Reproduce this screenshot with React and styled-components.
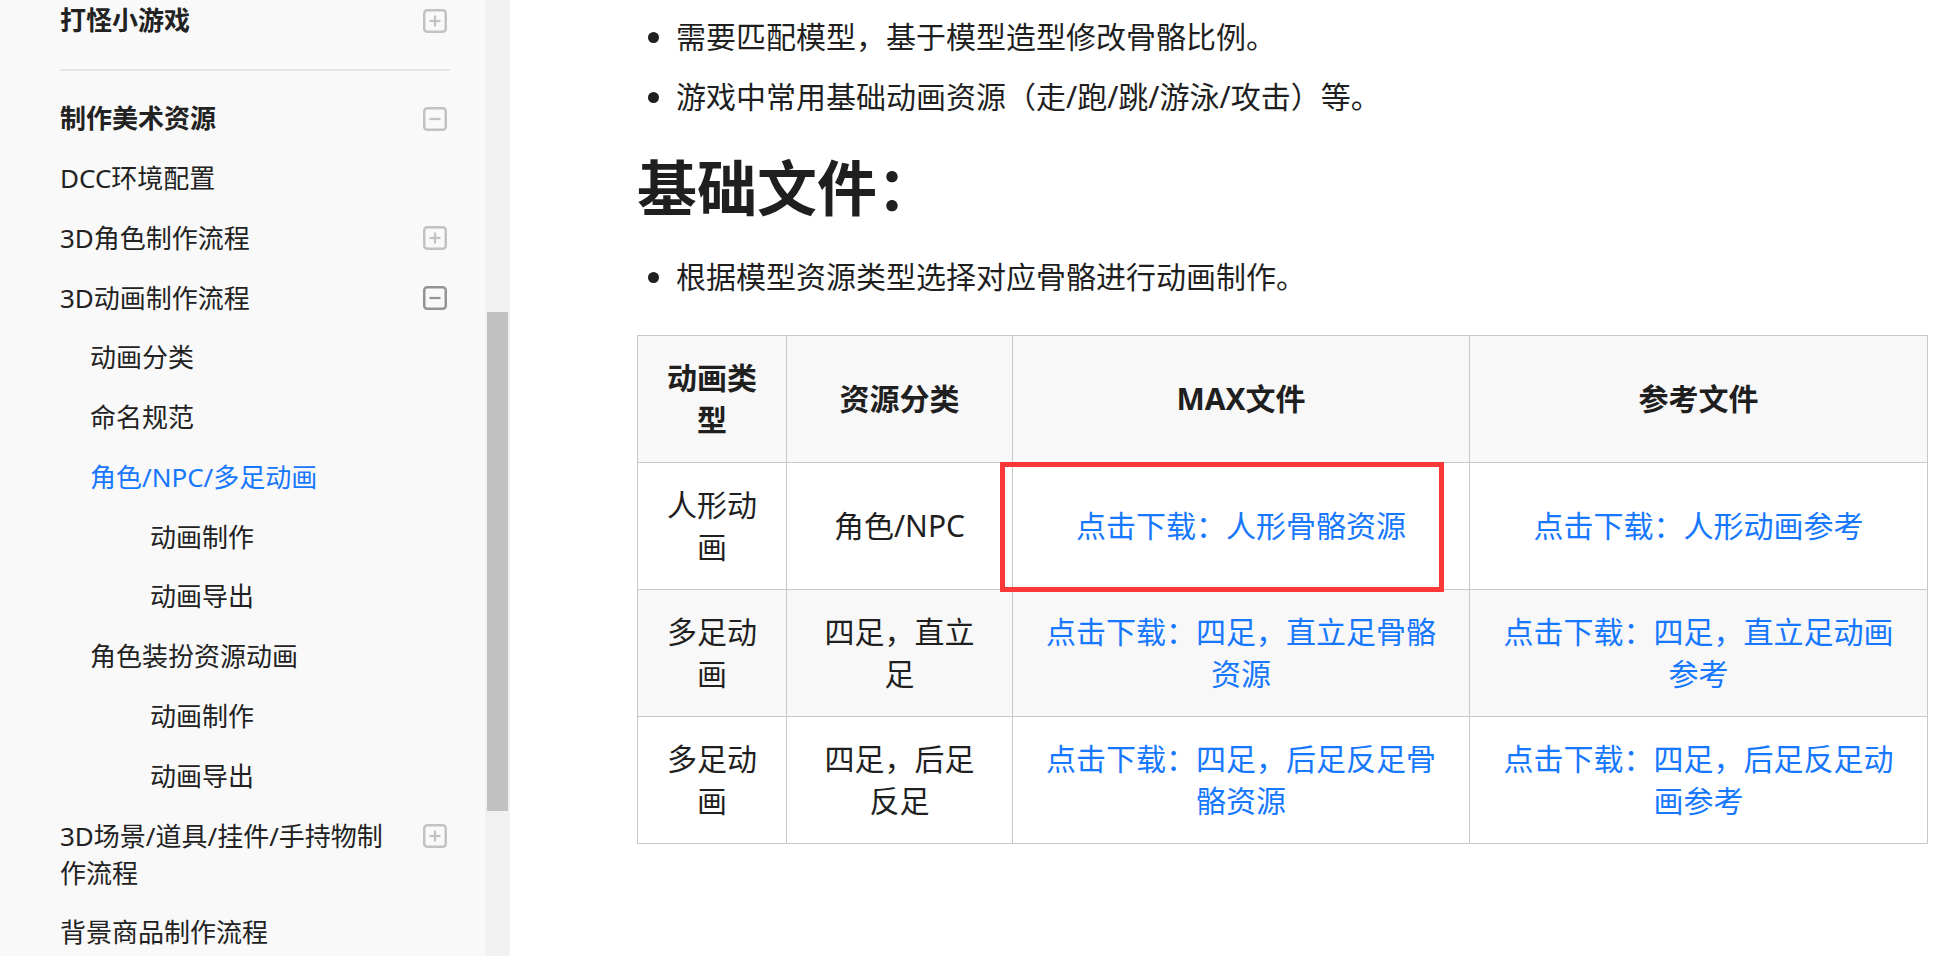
import React from "react";
import styled, { createGlobalStyle } from "styled-components";

const GlobalStyle = createGlobalStyle`
  html, body {
    margin: 0;
    padding: 0;
    height: 956px;
    overflow: hidden;
    background: #ffffff;
    font-family: "Noto Sans", "Noto Sans CJK SC", sans-serif;
    color: #222222;
  }
`;

const NAV = [
  { label: "打怪小游戏", level: 0, bold: true, toggle: "plus" },
  { divider: true },
  { label: "制作美术资源", level: 0, bold: true, toggle: "minus" },
  { label: "DCC环境配置", level: 0 },
  { label: "3D角色制作流程", level: 0, toggle: "plus" },
  { label: "3D动画制作流程", level: 0, toggle: "minus", dark: true },
  { label: "动画分类", level: 1 },
  { label: "命名规范", level: 1 },
  { label: "角色/NPC/多足动画", level: 1, active: true },
  { label: "动画制作", level: 2 },
  { label: "动画导出", level: 2 },
  { label: "角色装扮资源动画", level: 1 },
  { label: "动画制作", level: 2 },
  { label: "动画导出", level: 2 },
  { label: "3D场景/道具/挂件/手持物制作流程", level: 0, toggle: "plus" },
  { label: "背景商品制作流程", level: 0 },
];

const INDENT = [60, 90, 150];

const ROWS = [
  {
    type: "人形动画",
    kind: "角色/NPC",
    max: "点击下载：人形骨骼资源",
    ref: "点击下载：人形动画参考",
    marked: true,
  },
  {
    type: "多足动画",
    kind: "四足，直立足",
    max: "点击下载：四足，直立足骨骼资源",
    ref: "点击下载：四足，直立足动画参考",
  },
  {
    type: "多足动画",
    kind: "四足，后足反足",
    max: "点击下载：四足，后足反足骨骼资源",
    ref: "点击下载：四足，后足反足动画参考",
  },
];

const Page = styled.div`
  display: flex;
  height: 956px;
  overflow: hidden;
`;

const Sidebar = styled.aside`
  width: 485px;
  flex: none;
  background: #f9f9f9;
  overflow: hidden;
`;

const NavList = styled.nav`
  margin-top: -9px;
  display: flex;
  flex-direction: column;
`;

const NavRow = styled.div`
  display: flex;
  align-items: flex-start;
  padding: 11.4px 38px 11.4px ${(p) => INDENT[p.$level]}px;
  font-size: 26px;
  line-height: 37px;
  font-weight: ${(p) => (p.$bold ? 700 : 400)};
  color: ${(p) => (p.$active ? "#1677ff" : "#222222")};
`;

const NavText = styled.span`
  flex: 1;
  margin-right: 22px;
`;

const Divider = styled.div`
  height: 2px;
  background: #e6e6e6;
  margin: 18px 35px 18px 60px;
`;

const ToggleBox = styled.svg`
  flex: none;
  width: 24px;
  height: 24px;
  margin-top: 6.5px;
  color: ${(p) => (p.$dark ? "#949494" : "#c2c2c2")};
`;

const Track = styled.div`
  width: 25px;
  flex: none;
  background: #f1f1f1;
  display: flex;
  justify-content: center;
`;

const Thumb = styled.div`
  width: 21px;
  height: 499px;
  margin-top: 312px;
  background: #c1c1c1;
`;

const Main = styled.main`
  flex: 1;
  padding: 16px 32px 0 127px;
  color: #1f1f1f;
`;

const List = styled.ul`
  margin: 0;
  padding-left: 39px;
  font-size: 30px;
  line-height: 42px;
`;

const Item = styled.li`
  margin-bottom: 18px;
  &:last-child {
    margin-bottom: 0;
  }
`;

const Heading = styled.h2`
  margin: 31px 0 29px;
  font-size: 60px;
  line-height: 78px;
  font-weight: 700;
  color: #1f1f1f;
`;

const Table = styled.table`
  margin-top: 37px;
  width: 100%;
  table-layout: fixed;
  border-collapse: collapse;
  font-size: 30px;
  line-height: 42px;
`;

const HeadCell = styled.th`
  border: 1px solid #c8c8c8;
  background: #f8f8f8;
  padding: 21px 26px;
  font-weight: 700;
  text-align: center;
  vertical-align: middle;
`;

const Row = styled.tr`
  background: ${(p) => (p.$striped ? "#f8f8f8" : "#ffffff")};
`;

const Cell = styled.td`
  position: relative;
  border: 1px solid #c8c8c8;
  padding: 21px 26px;
  text-align: center;
  vertical-align: middle;
`;

const Link = styled.a`
  color: #1677ff;
  text-decoration: none;
`;

const Mark = styled.span`
  position: absolute;
  left: -13px;
  top: -1px;
  width: 444px;
  height: 130px;
  box-sizing: border-box;
  border: 5px solid #fb3838;
  pointer-events: none;
`;

function Toggle({ kind, dark }) {
  return (
    <ToggleBox $dark={dark} viewBox="0 0 24 24" fill="none">
      <rect x="1.25" y="1.25" width="21.5" height="21.5" rx="3" stroke="currentColor" strokeWidth="2.5" />
      <line x1="6.5" y1="12" x2="17.5" y2="12" stroke="currentColor" strokeWidth="2.2" />
      {kind === "plus" && (
        <line x1="12" y1="6.5" x2="12" y2="17.5" stroke="currentColor" strokeWidth="2.2" />
      )}
    </ToggleBox>
  );
}

export default function App() {
  return (
    <>
      <GlobalStyle />
      <Page>
        <Sidebar>
          <NavList>
            {NAV.map((n, i) =>
              n.divider ? (
                <Divider key={i} />
              ) : (
                <NavRow key={i} $level={n.level} $bold={n.bold} $active={n.active}>
                  <NavText>{n.label}</NavText>
                  {n.toggle && <Toggle kind={n.toggle} dark={n.dark} />}
                </NavRow>
              )
            )}
          </NavList>
        </Sidebar>
        <Track>
          <Thumb />
        </Track>
        <Main>
          <List>
            <Item>需要匹配模型，基于模型造型修改骨骼比例。</Item>
            <Item>游戏中常用基础动画资源（走/跑/跳/游泳/攻击）等。</Item>
          </List>
          <Heading>基础文件：</Heading>
          <List>
            <Item>根据模型资源类型选择对应骨骼进行动画制作。</Item>
          </List>
          <Table>
            <colgroup>
              <col style={{ width: 149 }} />
              <col style={{ width: 226 }} />
              <col style={{ width: 457 }} />
              <col style={{ width: 458 }} />
            </colgroup>
            <thead>
              <tr>
                <HeadCell>动画类型</HeadCell>
                <HeadCell>资源分类</HeadCell>
                <HeadCell>MAX文件</HeadCell>
                <HeadCell>参考文件</HeadCell>
              </tr>
            </thead>
            <tbody>
              {ROWS.map((r, i) => (
                <Row key={i} $striped={i === 1}>
                  <Cell>{r.type}</Cell>
                  <Cell>{r.kind}</Cell>
                  <Cell>
                    <Link href="#">{r.max}</Link>
                    {r.marked && <Mark />}
                  </Cell>
                  <Cell>
                    <Link href="#">{r.ref}</Link>
                  </Cell>
                </Row>
              ))}
            </tbody>
          </Table>
        </Main>
      </Page>
    </>
  );
}
